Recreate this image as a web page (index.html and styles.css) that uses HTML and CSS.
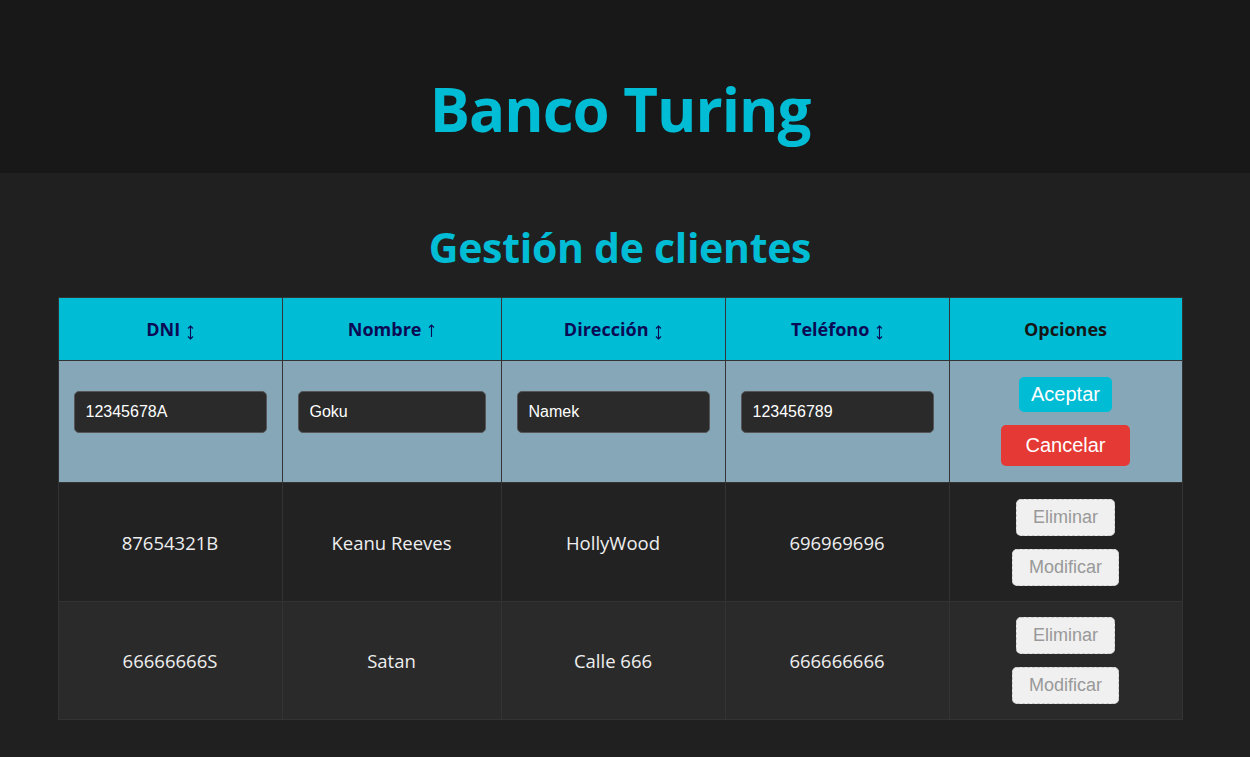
FILE: index.html
```html
<!DOCTYPE html>
<html lang="es">
<head>
    <meta charset="UTF-8">
    <meta name="viewport" content="width=device-width, initial-scale=1.0">
    <title>Banco Turing - Gestión de clientes</title>
    <link rel="stylesheet" href="styles.css">
</head>
<body>
    <header class="top-bar">
        <h1>Banco Turing</h1>
    </header>

    <main class="content">
        <h2>Gestión de clientes</h2>
        <table class="clients">
            <thead>
                <tr>
                    <th class="col-dni"><span class="sortable">DNI <svg class="arrow-both" viewBox="0 0 7 15"><path d="M3.5 1V14M1 3.5L3.5 1L6 3.5M1 11.5L3.5 14L6 11.5"/></svg></span></th>
                    <th class="col-name"><span class="sortable">Nombre <svg class="arrow-up" viewBox="0 0 7 13"><path d="M3.5 1V13M1 3.5L3.5 1L6 3.5"/></svg></span></th>
                    <th class="col-addr"><span class="sortable">Dirección <svg class="arrow-both" viewBox="0 0 7 15"><path d="M3.5 1V14M1 3.5L3.5 1L6 3.5M1 11.5L3.5 14L6 11.5"/></svg></span></th>
                    <th class="col-phone"><span class="sortable">Teléfono <svg class="arrow-both" viewBox="0 0 7 15"><path d="M3.5 1V14M1 3.5L3.5 1L6 3.5M1 11.5L3.5 14L6 11.5"/></svg></span></th>
                    <th class="col-opts">Opciones</th>
                </tr>
            </thead>
            <tbody>
                <tr class="edit-row">
                    <td><input type="text" value="12345678A"></td>
                    <td><input type="text" value="Goku"></td>
                    <td><input type="text" value="Namek"></td>
                    <td><input type="text" value="123456789"></td>
                    <td>
                        <div class="options">
                            <button class="btn-accept">Aceptar</button>
                            <button class="btn-cancel">Cancelar</button>
                        </div>
                    </td>
                </tr>
                <tr class="row-odd">
                    <td>87654321B</td>
                    <td>Keanu Reeves</td>
                    <td>HollyWood</td>
                    <td>696969696</td>
                    <td>
                        <div class="options">
                            <button class="btn-disabled" disabled>Eliminar</button>
                            <button class="btn-disabled" disabled>Modificar</button>
                        </div>
                    </td>
                </tr>
                <tr class="row-even">
                    <td>66666666S</td>
                    <td>Satan</td>
                    <td>Calle 666</td>
                    <td>666666666</td>
                    <td>
                        <div class="options">
                            <button class="btn-disabled" disabled>Eliminar</button>
                            <button class="btn-disabled" disabled>Modificar</button>
                        </div>
                    </td>
                </tr>
            </tbody>
        </table>
    </main>
</body>
</html>
```

FILE: styles.css
```css
body {
    margin: 0;
    padding: 0;
    background-color: #202020;
    font-family: "Open Sans", "Noto Sans", sans-serif;
    color: #eeeeee;
}
.top-bar {
    background-color: #181818;
    height: 173px;
    padding-right: 10px;
    display: flex;
    justify-content: center;
    align-items: center;
}
.top-bar h1 {
    margin: 0;
    padding-top: 44px;
    font-size: 60px;
    line-height: 1;
    color: #00bcd4;
    letter-spacing: -1px;
}
.content {
    padding: 52px 10px 38px 0;
}
.content h2 {
    margin: 0 0 27px;
    text-align: center;
    font-size: 41px;
    line-height: 45px;
    color: #00bcd4;
    letter-spacing: -0.3px;
}
.clients {
    width: 1124px;
    margin: 0 auto;
    border-collapse: collapse;
    table-layout: fixed;
}
.col-dni { width: 224px; }
.col-name { width: 219px; }
.col-addr { width: 224px; }
.col-phone { width: 224px; }
.col-opts { width: 233px; }
.clients th {
    background-color: #00bcd4;
    color: #161616;
    font-size: 18px;
    font-weight: bold;
    height: 63px;
    padding: 0 15px;
    border: 1px solid #333333;
    box-sizing: border-box;
}
.sortable {
    color: #0b0b55;
}
.arrow-both,
.arrow-up {
    width: 7px;
    fill: none;
    stroke: currentColor;
    stroke-width: 1.1;
    margin-left: 2px;
}
.arrow-both {
    height: 15px;
    vertical-align: -4px;
}
.arrow-up {
    height: 13px;
    vertical-align: -1px;
}
.clients td {
    text-align: center;
    border: 1px solid #333333;
    padding: 15px;
    font-size: 18.5px;
    box-sizing: border-box;
}
.row-odd td {
    background-color: #222222;
    height: 119px;
}
.row-even td {
    background-color: #2a2a2a;
    height: 118px;
}
.edit-row td {
    background-color: #86a7b8;
    height: 122px;
    padding: 14px 15px;
}
.edit-row input {
    display: block;
    width: 100%;
    height: 42px;
    box-sizing: border-box;
    margin-bottom: 19px;
    padding: 0 11px;
    background-color: #2a2a2a;
    border: 1px solid #555555;
    border-radius: 5px;
    color: #ffffff;
    font-family: "Liberation Sans", Arial, sans-serif;
    font-size: 16px;
}
.options {
    display: flex;
    flex-direction: column;
    align-items: center;
    gap: 13px;
}
.options button {
    font-family: "Liberation Sans", Arial, sans-serif;
    border-radius: 5px;
    cursor: pointer;
}
.btn-accept {
    background-color: #00bcd4;
    color: #ffffff;
    border: none;
    font-size: 20px;
    padding: 6px 12px;
}
.btn-cancel {
    background-color: #e53935;
    color: #ffffff;
    border: none;
    font-size: 20px;
    padding: 9px 24px;
}
.btn-disabled {
    background-color: #f0f0f0;
    color: #999999;
    border: 1px dashed #cccccc;
    font-size: 18px;
    padding: 7px 16px;
    cursor: not-allowed;
}
```
